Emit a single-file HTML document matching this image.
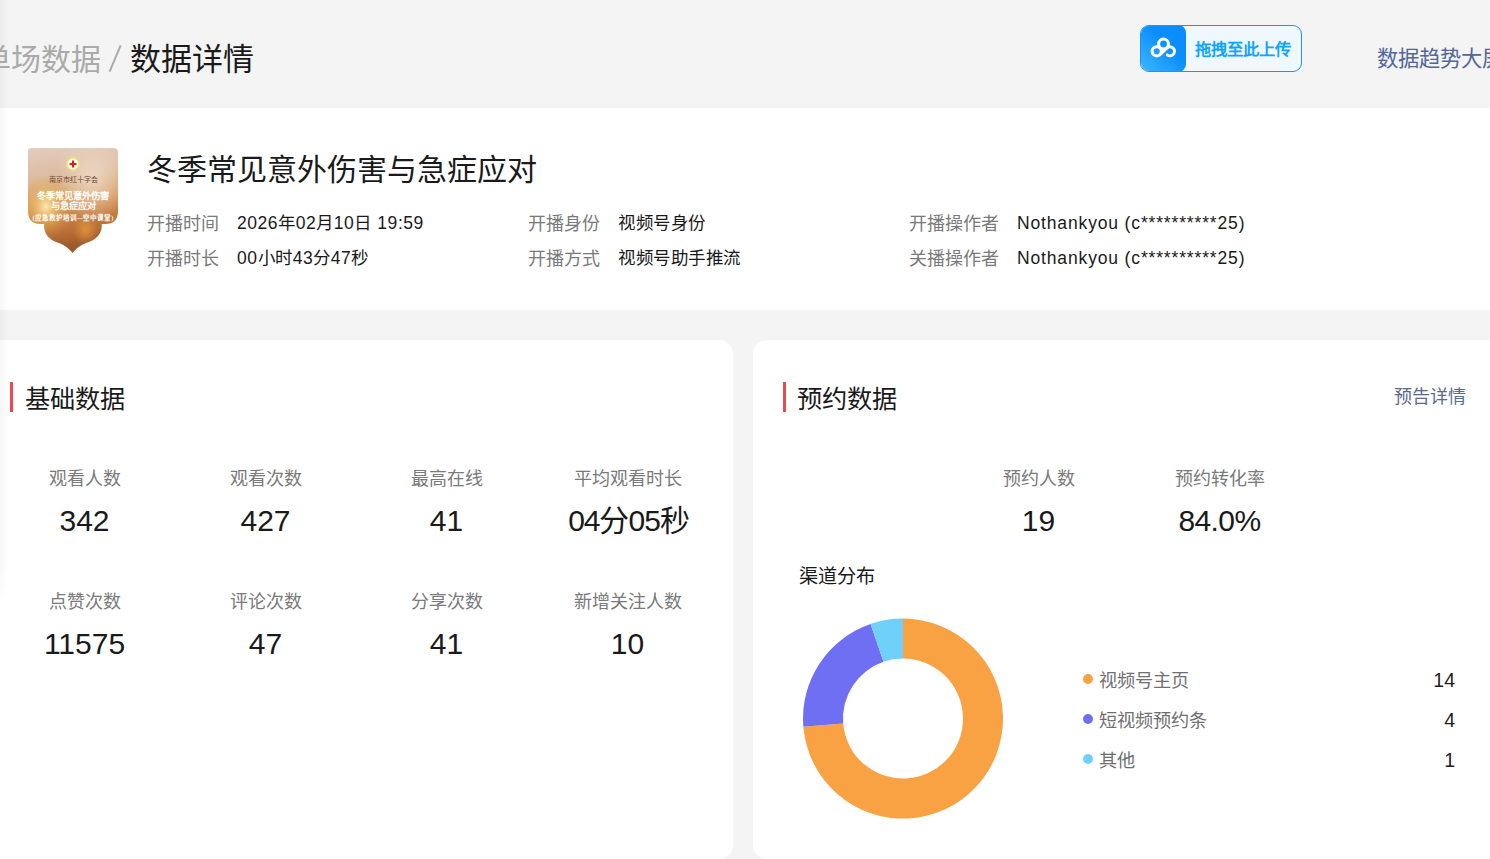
<!DOCTYPE html>
<html lang="zh-CN">
<head>
<meta charset="utf-8">
<style>
*{margin:0;padding:0;box-sizing:border-box}
html,body{width:1490px;height:859px;overflow:hidden;background:#f4f4f4;font-family:"Liberation Sans",sans-serif;color:#1a1a1a}
.a{position:absolute;white-space:nowrap;line-height:1}
#shadow{position:absolute;left:0;top:0;width:8px;height:605px;background:linear-gradient(90deg,rgba(0,0,0,0.035),rgba(0,0,0,0));-webkit-mask-image:linear-gradient(180deg,#000 0,#000 565px,transparent 605px);mask-image:linear-gradient(180deg,#000 0,#000 565px,transparent 605px)}
#info{position:absolute;left:0;top:108px;width:1490px;height:202px;background:#fff}
.card{position:absolute;top:340px;height:519px;width:753px;background:#fff;border-radius:14px}
.bar{position:absolute;width:3px;height:30px;background:#f0464f}
.lbl{color:#7a7a7a;font-size:18px}
.val{color:#1a1a1a;font-size:17.5px;letter-spacing:0.55px}
.lat{letter-spacing:0.85px}
.sl{color:#7a7a7a;font-size:18px;text-align:center;width:181px}
.sn{color:#1a1a1a;font-size:30px;text-align:center;width:181px}
</style>
</head>
<body>
<div id="info"></div>
<div class="card" style="left:-20px"></div>
<div class="card" style="left:753px"></div>
<div id="shadow"></div>

<!-- breadcrumb -->
<div class="a" style="left:-19px;top:45px;font-size:30px;color:#aaaaaa">单场数据</div>
<svg style="position:absolute;left:100px;top:40px" width="30" height="40"><line x1="9.6" y1="31.6" x2="20.6" y2="5.4" stroke="#aaaaaa" stroke-width="2"/></svg>
<div class="a" style="left:130px;top:44px;font-size:31px;color:#1a1a1a">数据详情</div>

<!-- upload button -->
<div class="a" style="left:1140px;top:25px;width:162px;height:47px;border:1px solid #1595ff;border-radius:9px;background:#eff8ff;overflow:hidden">
  <div style="position:absolute;left:-1px;top:-1px;width:46px;height:47px;border-radius:8px;background:linear-gradient(45deg,#40b8ff,#0a8dff 60%)">
    <svg width="46" height="47" viewBox="0 0 46 47" style="position:absolute;left:0;top:0"><g fill="none" stroke="#fff" stroke-width="3" stroke-linecap="round">
      <circle cx="23.5" cy="19" r="4.9"/>
      <circle cx="16.7" cy="26.3" r="4.6"/>
      <path d="M19.95,29.55L26.8,23.1A4.5,4.5 0 1 1 27.3,29.9"/>
    </g></svg>
  </div>
  <div style="position:absolute;left:54px;top:15px;font-size:16.3px;font-weight:bold;color:#0ea5fa">拖拽至此上传</div>
</div>
<div class="a" style="left:1377px;top:49px;font-size:21.3px;color:#52669a">数据趋势大屏</div>

<!-- info -->
<svg style="position:absolute;left:28px;top:148px" width="90" height="105" viewBox="0 0 90 105">
<defs>
<linearGradient id="tg" x1="0" y1="0" x2="0.15" y2="1">
<stop offset="0" stop-color="#e4cdbf"/>
<stop offset="0.3" stop-color="#dcbba0"/>
<stop offset="0.5" stop-color="#d8a168"/>
<stop offset="0.7" stop-color="#c98245"/>
<stop offset="0.86" stop-color="#b56c36"/>
<stop offset="1" stop-color="#9c582b"/>
</linearGradient>
<radialGradient id="tl" cx="0.72" cy="0.28" r="0.42">
<stop offset="0" stop-color="#f0dccb" stop-opacity="0.85"/>
<stop offset="1" stop-color="#f0dccb" stop-opacity="0"/>
</radialGradient>
<radialGradient id="glow" cx="0.2" cy="0.56" r="0.3">
<stop offset="0" stop-color="#fff3c0" stop-opacity="0.9"/>
<stop offset="0.5" stop-color="#f2c060" stop-opacity="0.45"/>
<stop offset="1" stop-color="#e8a040" stop-opacity="0"/>
</radialGradient>
<radialGradient id="bok" cx="0.64" cy="0.78" r="0.14">
<stop offset="0" stop-color="#e79a3a" stop-opacity="0.8"/>
<stop offset="1" stop-color="#e79a3a" stop-opacity="0"/>
</radialGradient>
<clipPath id="sh"><path d="M3,0H85Q90,0 90,5V63Q90,76 77,76H73.8C74.5,86 68,92 58,95Q50,98 44.5,105Q39,98 31,95C21,92 15.5,86 16.2,76H13Q0,76 0,63V3Q0,0 3,0Z"/></clipPath>
</defs>
<g clip-path="url(#sh)">
<rect width="90" height="105" fill="url(#tg)"/>
<rect width="90" height="105" fill="url(#tl)"/>
<rect width="90" height="105" fill="url(#glow)"/>
<rect width="90" height="105" fill="url(#bok)"/>
<circle cx="45" cy="16" r="7.2" fill="#ece07a"/>
<circle cx="45" cy="16" r="5.4" fill="#fffbe8"/>
<path d="M44,12.6h2v2.4h2.4v2h-2.4v2.4h-2v-2.4h-2.4v-2h2.4z" fill="#d81f1f"/>
<text x="45" y="33.5" font-size="7" fill="#6b4b33" text-anchor="middle" font-family="Liberation Serif,serif">南京市红十字会</text>
<text x="45" y="50.5" font-size="9.3" fill="#fff" font-weight="bold" text-anchor="middle" font-family="Liberation Serif,serif">冬季常见意外伤害</text>
<text x="45" y="61" font-size="9.3" fill="#fff" font-weight="bold" text-anchor="middle" font-family="Liberation Serif,serif">与急症应对</text>
<text x="45" y="72" font-size="6.5" fill="#fff" font-weight="bold" text-anchor="middle" font-family="Liberation Serif,serif">(应急救护培训—空中课堂)</text>
</g>
</svg>
<div class="a" style="left:147px;top:155px;font-size:30px;color:#1a1a1a">冬季常见意外伤害与急症应对</div>
<div class="a lbl" style="left:147px;top:215px">开播时间</div>
<div class="a val" style="left:237px;top:215px">2026年02月10日 19:59</div>
<div class="a lbl" style="left:147px;top:250px">开播时长</div>
<div class="a val" style="left:237px;top:250px">00小时43分47秒</div>
<div class="a lbl" style="left:528px;top:215px">开播身份</div>
<div class="a val" style="left:618px;top:215px">视频号身份</div>
<div class="a lbl" style="left:528px;top:250px">开播方式</div>
<div class="a val" style="left:618px;top:250px">视频号助手推流</div>
<div class="a lbl" style="left:909px;top:215px">开播操作者</div>
<div class="a val lat" style="left:1017px;top:215px">Nothankyou (c**********25)</div>
<div class="a lbl" style="left:909px;top:250px">关播操作者</div>
<div class="a val lat" style="left:1017px;top:250px">Nothankyou (c**********25)</div>

<!-- left card -->
<div class="bar" style="left:10px;top:382px"></div>
<div class="a" style="left:25px;top:387px;font-size:25.2px">基础数据</div>

<div class="a sl" style="left:-6px;top:470px">观看人数</div>
<div class="a sn" style="left:-6px;top:506px">342</div>
<div class="a sl" style="left:175px;top:470px">观看次数</div>
<div class="a sn" style="left:175px;top:506px">427</div>
<div class="a sl" style="left:356px;top:470px">最高在线</div>
<div class="a sn" style="left:356px;top:506px">41</div>
<div class="a sl" style="left:537px;top:470px">平均观看时长</div>
<div class="a sn" style="left:537px;top:506px;letter-spacing:-1px;text-indent:2px">04分05秒</div>

<div class="a sl" style="left:-6px;top:593px">点赞次数</div>
<div class="a sn" style="left:-6px;top:629px">11575</div>
<div class="a sl" style="left:175px;top:593px">评论次数</div>
<div class="a sn" style="left:175px;top:629px">47</div>
<div class="a sl" style="left:356px;top:593px">分享次数</div>
<div class="a sn" style="left:356px;top:629px">41</div>
<div class="a sl" style="left:537px;top:593px">新增关注人数</div>
<div class="a sn" style="left:537px;top:629px">10</div>

<!-- right card -->
<div class="bar" style="left:783px;top:382px"></div>
<div class="a" style="left:797px;top:387px;font-size:25.2px">预约数据</div>
<div class="a" style="left:1394px;top:388px;font-size:18px;color:#5a6a8c">预告详情</div>

<div class="a sl" style="left:948px;top:470px">预约人数</div>
<div class="a sn" style="left:948px;top:506px">19</div>
<div class="a sl" style="left:1129px;top:470px">预约转化率</div>
<div class="a sn" style="left:1129px;top:506px;letter-spacing:-0.6px">84.0%</div>

<div class="a" style="left:799px;top:567px;font-size:19.2px;color:#1a1a1a">渠道分布</div>

<svg style="position:absolute;left:0;top:0" width="1490" height="859" viewBox="0 0 1490 859">
<path d="M903.00,618.60A100,100 0 1 1 803.34,726.86L843.20,723.55A60,60 0 1 0 903.00,658.60Z" fill="#f9a244"/>
<path d="M803.34,726.86A100,100 0 0 1 870.53,624.02L883.52,661.85A60,60 0 0 0 843.20,723.55Z" fill="#6f6ff3"/>
<path d="M870.53,624.02A100,100 0 0 1 903.00,618.60L903.00,658.60A60,60 0 0 0 883.52,661.85Z" fill="#6fd0fa"/>
<circle cx="1088" cy="679" r="5" fill="#f9a244"/>
<circle cx="1088" cy="719" r="5" fill="#6f6ff3"/>
<circle cx="1088" cy="759" r="5" fill="#6fd0fa"/>
</svg>
<div class="a" style="left:1099px;top:672px;font-size:18.2px;color:#707070">视频号主页</div>
<div class="a" style="left:1099px;top:712px;font-size:18.2px;color:#707070">短视频预约条</div>
<div class="a" style="left:1099px;top:752px;font-size:18.2px;color:#707070">其他</div>
<div class="a" style="left:1355px;width:100px;text-align:right;top:671px;font-size:19.5px;color:#222">14</div>
<div class="a" style="left:1355px;width:100px;text-align:right;top:711px;font-size:19.5px;color:#222">4</div>
<div class="a" style="left:1355px;width:100px;text-align:right;top:751px;font-size:19.5px;color:#222">1</div>

</body>
</html>
